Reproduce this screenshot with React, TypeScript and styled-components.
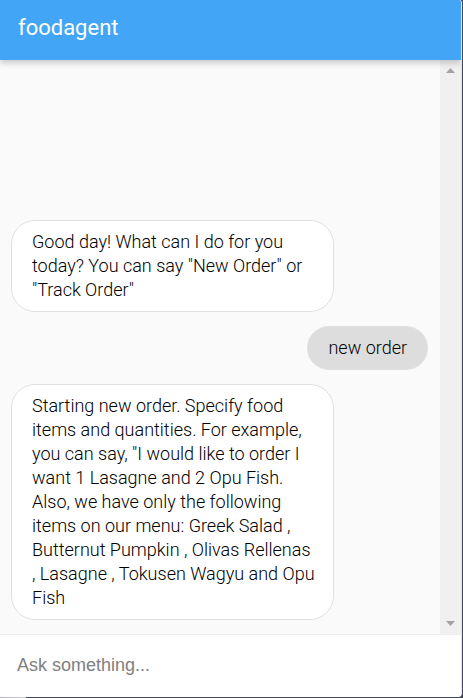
import React, { useState } from "react";
import styled, { createGlobalStyle } from "styled-components";

const GlobalStyle = createGlobalStyle`
  * { box-sizing: border-box; }
  body { margin: 0; background: #45475a; font-family: Roboto, "Liberation Sans", sans-serif; }
`;

const Frame = styled.div`
  min-height: 100vh;
  display: flex;
  padding: 0 1px 1px 0;
  background: linear-gradient(90deg, #b9b9c0 0, #c9c9cd 26px, #45475a 26px);
`;

const Chat = styled.main`
  flex: 1;
  min-width: 0;
  display: flex;
  flex-direction: column;
  background: #fafafa;
  border-right: 1px solid #e4e4e4;
  border-radius: 0 3px 4px 0;
  overflow: hidden;
`;

const TitleBar = styled.header`
  z-index: 1;
  height: 60px;
  padding: 0 18px;
  display: flex;
  align-items: center;
  background: #42a5f5;
  box-shadow: 0 3px 6px rgba(0, 0, 0, 0.2);
`;

const Title = styled.h1`
  margin: 0 0 4px;
  color: #fff;
  font-size: 22px;
  font-weight: 400;
  line-height: 28px;
`;

const Body = styled.div`
  flex: 1;
  display: flex;
`;

const Messages = styled.section`
  flex: 1;
  min-width: 0;
  display: flex;
  flex-direction: column;
  justify-content: flex-end;
  gap: 14px;
  padding: 14px 12px 14px 11px;
`;

const Bubble = styled.p<{ $own?: boolean }>`
  margin: 0;
  max-width: 323px;
  align-self: ${({ $own }) => ($own ? "flex-end" : "flex-start")};
  padding: ${({ $own }) => ($own ? "9px 20px" : "9px 16px 9px 20px")};
  border: 1px solid #e0e0e0;
  border-radius: 24px;
  background: ${({ $own }) => ($own ? "#ddd" : "#fff")};
  color: #000;
  font-size: 18px;
  font-weight: 350;
  line-height: 24px;
`;

const ScrollTrack = styled.div`
  width: 21px;
  display: flex;
  flex-direction: column;
  justify-content: space-between;
  align-items: center;
  padding: 8px 0;
  background: #f0f0f0;
`;

const Prompt = styled.input`
  width: 100%;
  height: 63px;
  padding: 0 17px 2px;
  border: 0;
  border-top: 1px solid #eee;
  outline: 0;
  background: #fff;
  color: #212121;
  font-family: "Liberation Sans", Arial, sans-serif;
  font-size: 18px;
  &::placeholder { color: #808080; opacity: 1; }
`;

const messages = [
  { text: 'Good day! What can I do for you today? You can say "New Order" or "Track Order"', own: false },
  { text: "new order", own: true },
  {
    text: 'Starting new order. Specify food items and quantities. For example, you can say, "I would like to order I want 1 Lasagne and 2 Opu Fish. Also, we have only the following items on our menu: Greek Salad , Butternut Pumpkin , Olivas Rellenas , Lasagne , Tokusen Wagyu and Opu Fish',
    own: false,
  },
];

export default function App() {
  const [draft, setDraft] = useState("");
  return (
    <Frame>
      <GlobalStyle />
      <Chat>
        <TitleBar>
          <Title>foodagent</Title>
        </TitleBar>
        <Body>
          <Messages aria-label="Conversation">
            {messages.map((m) => (
              <Bubble key={m.text} $own={m.own}>{m.text}</Bubble>
            ))}
          </Messages>
          <ScrollTrack aria-hidden="true">
            <svg width="9" height="5" viewBox="0 0 9 5"><path d="M0 5 4.500 0 9 5z" fill="#a3a3a3" /></svg>
            <svg width="9" height="5" viewBox="0 0 9 5"><path d="M0 0 4.500 5 9 0z" fill="#a3a3a3" /></svg>
          </ScrollTrack>
        </Body>
        <Prompt
          aria-label="Ask something"
          placeholder="Ask something..."
          value={draft}
          onChange={(e) => setDraft(e.target.value)}
        />
      </Chat>
    </Frame>
  );
}
